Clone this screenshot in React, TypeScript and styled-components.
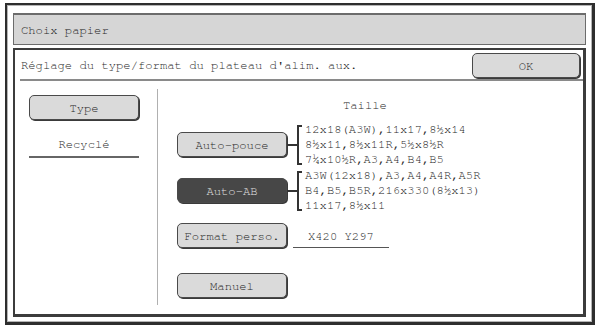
import React, { FC } from 'react';
import styled, { createGlobalStyle } from 'styled-components';

const GlobalStyle = createGlobalStyle`
  html, body {
    margin: 0;
    padding: 0;
    background: #fff;
  }
  body {
    font-family: "Nimbus Mono PS", "Nimbus Mono L", "FreeMono", "Courier New", "Liberation Mono", monospace;
    font-size: 12.2px;
    color: #1f1f1f;
  }
`;

interface ButtonProps {
  active?: boolean,
  width?: number,
}

const sizesInch = [
  '12x18(A3W),11x17,8½x14',
  '8½x11,8½x11R,5½x8½R',
  '7¼x10½R,A3,A4,B4,B5',
];

const sizesAB = [
  'A3W(12x18),A3,A4,A4R,A5R',
  'B4,B5,B5R,216x330(8½x13)',
  '11x17,8½x11',
];

const SizeGroup: FC<{ label: string, lines: string[], active?: boolean }> = ({ label, lines, active }) => (
  <SizeRow>
    <Button active={active}>{label}</Button>
    <Stub />
    <Bracket />
    <SizeList>
      {lines.map(line => <div key={line}>{line}</div>)}
    </SizeList>
  </SizeRow>
);

const App: FC = () => {
  return (
    <>
      <GlobalStyle />
      <Frame>
        <TitleBar>Choix papier</TitleBar>
        <Panel>
          <Header>
            <span>Réglage du type/format du plateau d'alim. aux.</span>
            <Button width={108}>OK</Button>
          </Header>
          <Body>
            <LeftCol>
              <Button>Type</Button>
              <ValueField>Recyclé</ValueField>
            </LeftCol>
            <RightCol>
              <Caption>Taille</Caption>
              <SizeGroup label="Auto-pouce" lines={sizesInch} />
              <SizeGroup label="Auto-AB" lines={sizesAB} active />
              <CustomRow>
                <Button>Format perso.</Button>
                <CustomValue>X420 Y297</CustomValue>
              </CustomRow>
              <ManualRow>
                <Button>Manuel</Button>
              </ManualRow>
            </RightCol>
          </Body>
        </Panel>
      </Frame>
    </>
  );
};

const Frame = styled.div`
  box-sizing: border-box;
  margin: 3px 0 0 5px;
  width: 590px;
  height: 322px;
  border: 2px solid #2e2e2e;
  border-right-width: 3px;
  border-bottom-width: 3px;
  box-shadow: inset 0 0 0 1px #b5b5b5;
  padding: 8px 6px 5px 6px;
  display: flex;
  flex-direction: column;
  gap: 3px;
`;

const TitleBar = styled.div`
  box-sizing: border-box;
  height: 32px;
  background: #d6d6d6;
  border: 1px solid #6c6c6c;
  border-top-width: 2px;
  padding-left: 7px;
  display: flex;
  align-items: center;
`;

const Panel = styled.div`
  flex: 1;
  background: #fff;
  border: 2px solid #3c3c3c;
  border-right-width: 3px;
  border-bottom-width: 3px;
  display: flex;
  flex-direction: column;
`;

const Header = styled.div`
  height: 31px;
  margin-left: 5px;
  padding: 3px 3px 0 1px;
  box-sizing: border-box;
  border-bottom: 2px solid #8a8a8a;
  display: flex;
  align-items: flex-start;
  justify-content: space-between;

  span {
    line-height: 25px;
  }
`;

const Button = styled.div<ButtonProps>`
  box-sizing: border-box;
  width: ${({ width }) => width || 110}px;
  height: 25px;
  flex-shrink: 0;
  border: 1px solid #4a4a4a;
  border-radius: 5px;
  box-shadow: 1px 1px 0 #3a3a3a;
  background: ${({ active }) => active ? '#474747' : '#dadada'};
  color: ${({ active }) => active ? '#e2e2e2' : '#1f1f1f'};
  display: flex;
  align-items: center;
  justify-content: center;
  white-space: nowrap;
`;

const Body = styled.div`
  flex: 1;
  display: flex;
`;

const LeftCol = styled.div`
  width: 142px;
  box-sizing: border-box;
  padding: 14px 0 0 14px;
  display: flex;
  flex-direction: column;
`;

const ValueField = styled.div`
  width: 110px;
  margin-top: 17px;
  padding-bottom: 5px;
  line-height: 14px;
  text-align: center;
  border-bottom: 2px solid #666;
`;

const RightCol = styled.div`
  flex: 1;
  margin: 8px 0 9px 0;
  border-left: 1px solid #b0b0b0;
  padding: 9px 0 0 19px;
  display: flex;
  flex-direction: column;
`;

const Caption = styled.div`
  line-height: 15px;
  padding-left: 166px;
  margin-bottom: 9px;
`;

const SizeRow = styled.div`
  height: 45px;
  margin-bottom: 1px;
  display: flex;
  align-items: center;
`;

const Stub = styled.span`
  width: 10px;
  height: 2px;
  background: #333;
`;

const Bracket = styled.span`
  align-self: stretch;
  width: 3px;
  margin: 3px 0 2px 0;
  border: 2px solid #333;
  border-right: none;
`;

const SizeList = styled.div`
  margin-left: 3px;
  line-height: 15px;
  white-space: nowrap;
`;

const CustomRow = styled.div`
  margin-top: 9px;
  display: flex;
  align-items: center;
`;

const CustomValue = styled.div`
  width: 96px;
  margin-left: 6px;
  padding: 0 0 3px 15px;
  box-sizing: border-box;
  border-bottom: 1px solid #555;
  line-height: 16px;
  position: relative;
  top: 2px;
`;

const ManualRow = styled.div`
  margin-top: 25px;
`;

export default App;
